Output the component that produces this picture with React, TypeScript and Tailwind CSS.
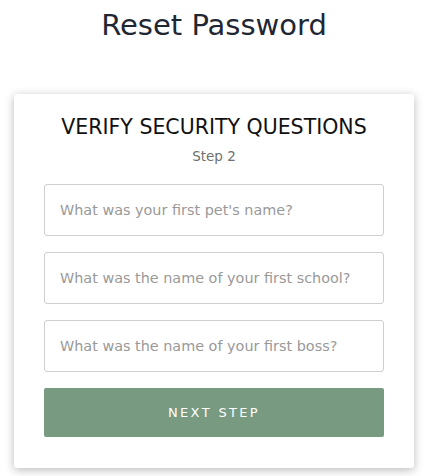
export default function App() {
  const questions = [
    "What was your first pet's name?",
    "What was the name of your first school?",
    "What was the name of your first boss?",
  ];

  return (
    <div
      className="min-h-[476px] w-[428px] bg-white"
      style={{ fontFamily: '"DejaVu Sans", "Open Sans", sans-serif' }}
    >
      <h1 className="pt-[8px] text-center text-[29px] leading-[34px] text-[#1f2733]">Reset Password</h1>

      <div className="mx-[14px] mt-[52px] rounded-[3px] bg-white px-[30px] pt-[20px] pb-[31px] shadow-[0_2px_10px_rgba(0,0,0,0.28)]">
        <h2 className="text-center text-[20.5px] leading-[26px] text-[#111]">VERIFY SECURITY QUESTIONS</h2>
        <p className="mt-[7px] text-center text-[13.5px] leading-[18px] text-[#6f6f6f]">Step 2</p>

        <form className="mt-[19px] flex flex-col gap-[16px]">
          {questions.map((q) => (
            <input
              key={q}
              type="text"
              placeholder={q}
              className="h-[52px] w-full rounded-[3px] border border-[#cfcfcf] px-[15px] text-[14.4px] outline-none placeholder:text-[#999]"
            />
          ))}
          <button
            type="button"
            className="h-[49px] w-full rounded-[2px] bg-[#789a81] text-[13px] tracking-[0.18em] text-white"
          >
            NEXT STEP
          </button>
        </form>
      </div>
    </div>
  );
}
